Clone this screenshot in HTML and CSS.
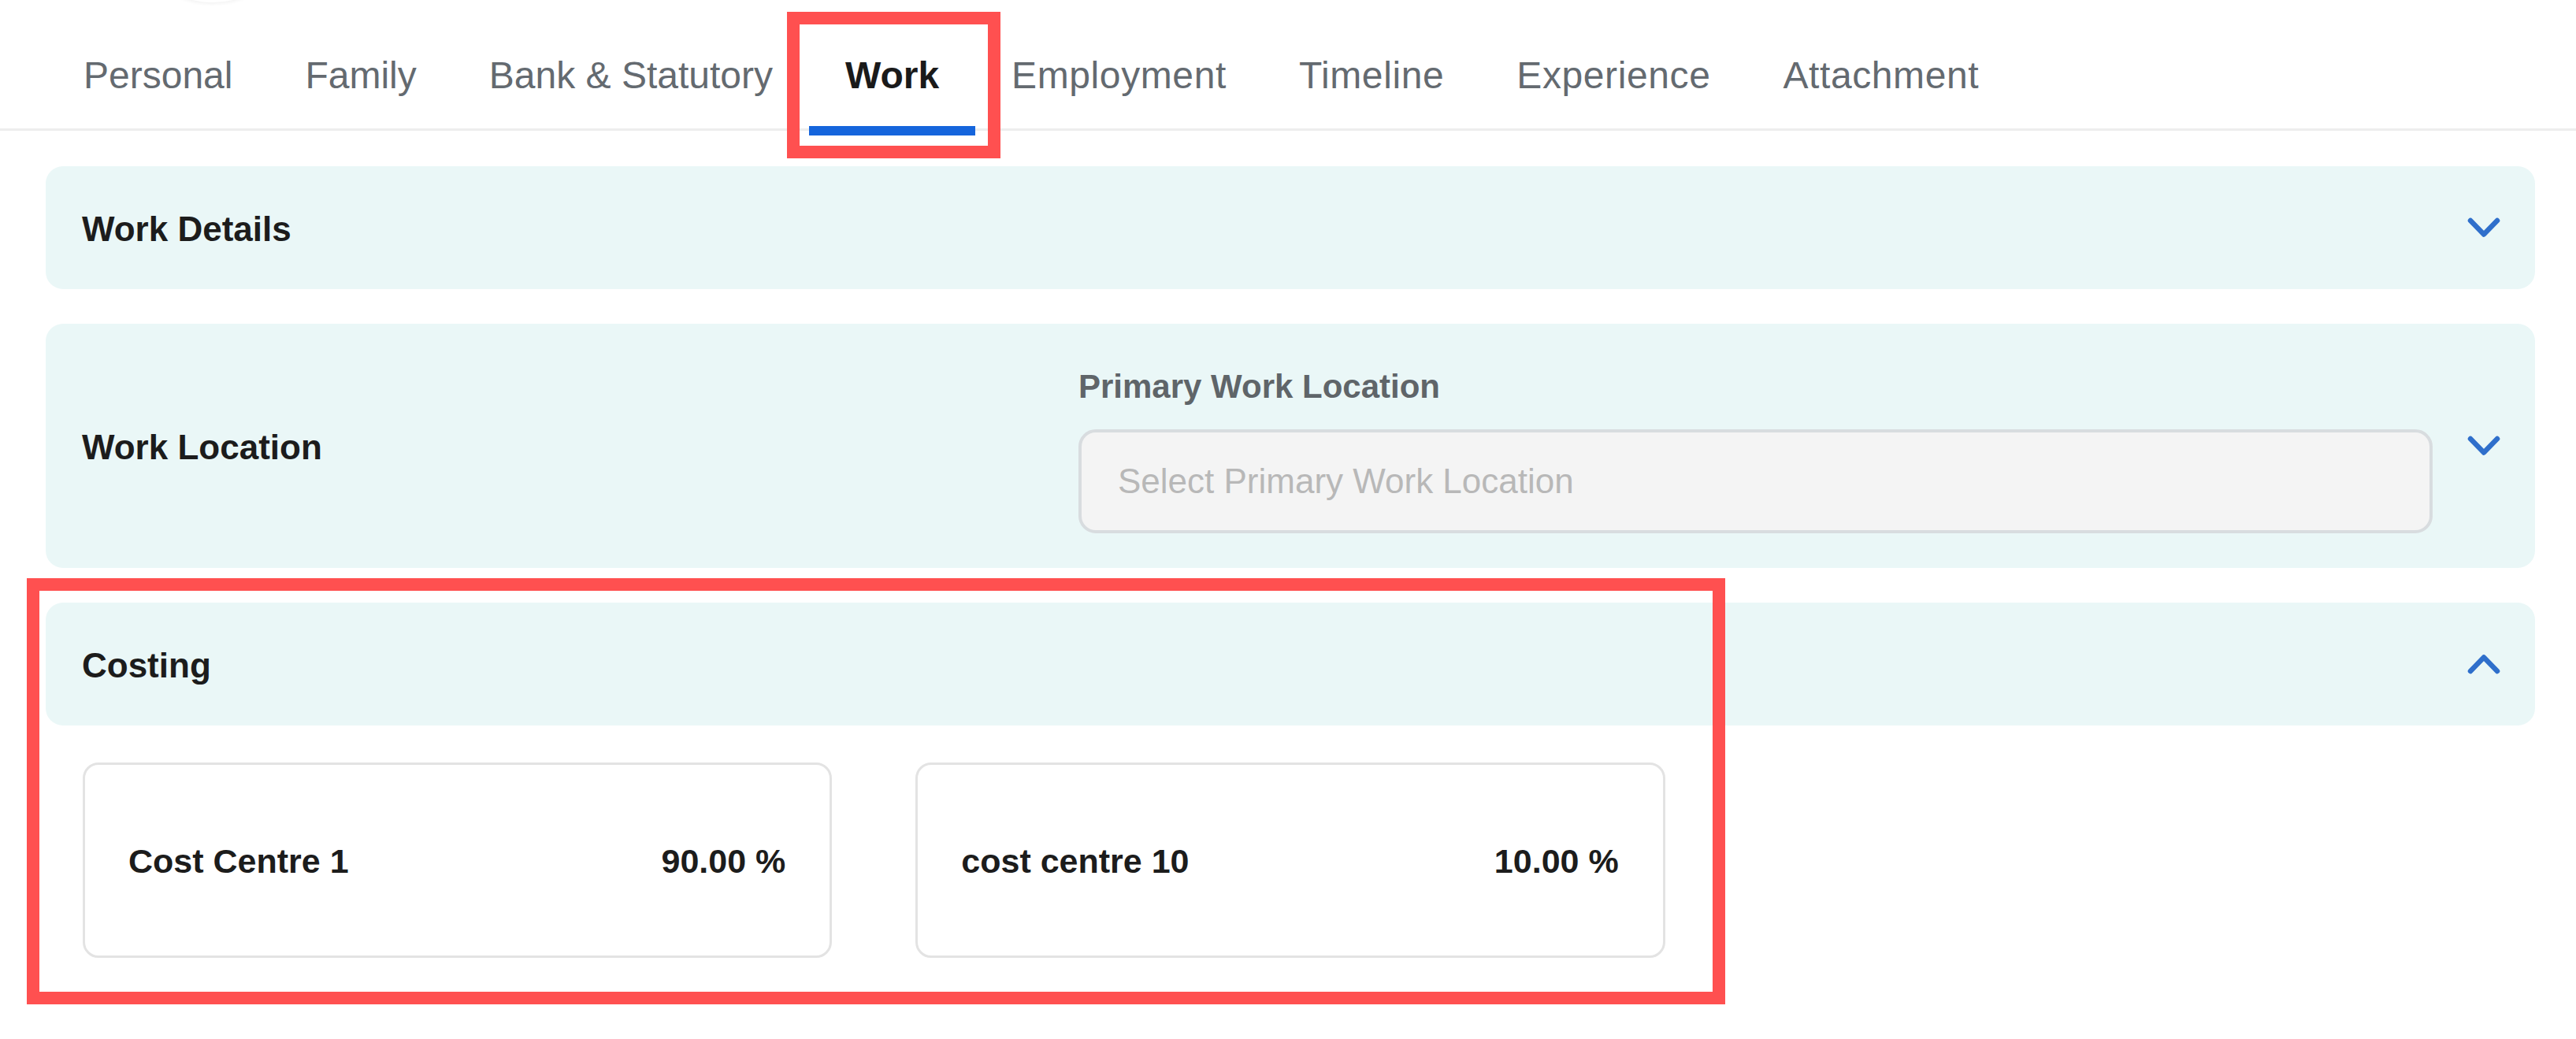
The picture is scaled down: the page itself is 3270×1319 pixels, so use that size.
FILE: index.html
```html
<!DOCTYPE html>
<html lang="en">
<head>
<meta charset="utf-8">
<title>Work</title>
<link rel="stylesheet" href="styles.css">
</head>
<body>
<div class="page">
  <div class="avatar-shadow"></div>
  <nav class="tabs">
    <div class="tab">Personal</div>
    <div class="tab">Family</div>
    <div class="tab">Bank &amp; Statutory</div>
    <div class="tab active">Work</div>
    <div class="tab">Employment</div>
    <div class="tab">Timeline</div>
    <div class="tab">Experience</div>
    <div class="tab">Attachment</div>
  </nav>

  <main class="sections">
    <section class="panel">
      <h2 class="panel-title">Work Details</h2>
      <svg class="chevron" viewBox="0 0 42 26" width="42" height="26"><polyline points="4,4 21,21.5 38,4"/></svg>
    </section>

    <section class="panel panel-form">
      <h2 class="panel-title title-col">Work Location</h2>
      <div class="field">
        <label class="field-label">Primary Work Location</label>
        <div class="select">Select Primary Work Location</div>
      </div>
      <svg class="chevron" viewBox="0 0 42 26" width="42" height="26"><polyline points="4,4 21,21.5 38,4"/></svg>
    </section>

    <section class="panel">
      <h2 class="panel-title">Costing</h2>
      <svg class="chevron" viewBox="0 0 42 26" width="42" height="26"><polyline points="4,22 21,4.5 38,22"/></svg>
    </section>

    <div class="cards">
      <div class="card"><span>Cost Centre 1</span><span>90.00 %</span></div>
      <div class="card"><span>cost centre 10</span><span>10.00 %</span></div>
    </div>
  </main>

  <div class="annot annot-tab"></div>
  <div class="annot annot-costing"></div>
</div>
</body>
</html>
```

FILE: styles.css
```css
* { box-sizing: border-box; }
html, body { margin: 0; padding: 0; background: #ffffff; }
body { font-family: "Liberation Sans", Arial, sans-serif; color: #1c1c1c; }

.page {
  position: relative;
  width: 3270px;
  height: 1319px;
  overflow: hidden;
}

.avatar-shadow {
  position: absolute;
  left: 205px;
  top: -70px;
  width: 130px;
  height: 73px;
  border-radius: 50%;
  box-shadow: 0 2px 4px rgba(0, 0, 0, 0.05);
}

/* Tabs */
.tabs {
  display: flex;
  padding-left: 60px;
  border-bottom: 3px solid #ededed;
}
.tab {
  position: relative;
  padding: 68px 46px 39px;
  font-size: 48px;
  line-height: 56px;
  color: #646a70;
  white-space: nowrap;
}
.tab.active ~ .tab {
  letter-spacing: 0.6px;
}
.tab.active {
  color: #1a1a1a;
  font-weight: 700;
}
.tab.active::after {
  content: "";
  position: absolute;
  left: 0;
  right: 0;
  bottom: -9px;
  height: 12px;
  background: #1565dc;
}

/* Sections */
.sections {
  display: flex;
  flex-direction: column;
  gap: 44px;
  padding: 45px 52px 0 58px;
}
.panel {
  display: flex;
  align-items: center;
  justify-content: space-between;
  height: 156px;
  padding: 0 44px 0 46px;
  background: #eaf7f7;
  border-radius: 22px;
}
.panel-title {
  margin: 0;
  padding-top: 3px;
  font-size: 44px;
  line-height: 52px;
  font-weight: 700;
  color: #1c1c1c;
}
.chevron {
  flex: 0 0 auto;
  fill: none;
  stroke: #2f6fcb;
  stroke-width: 6.5;
  stroke-linecap: round;
  stroke-linejoin: round;
}

.panel-form {
  height: 310px;
  padding-top: 56px;
  padding-bottom: 44px;
  justify-content: flex-start;
}
.title-col {
  flex: 0 0 1265px;
  margin-top: -12px;
}
.field {
  flex: 1 1 auto;
  display: flex;
  flex-direction: column;
  margin-right: 44px;
}
.field-label {
  font-size: 42px;
  line-height: 48px;
  font-weight: 700;
  color: #5f6569;
  margin-bottom: 30px;
}
.select {
  height: 132px;
  display: flex;
  align-items: center;
  padding: 0 46px;
  background: #f4f4f4;
  border: 4px solid #d8dcdf;
  border-radius: 22px;
  font-size: 44px;
  color: #b8b8b8;
}
.panel-form .chevron {
  margin-top: -12px;
}

/* Cards */
.cards {
  display: grid;
  grid-template-columns: repeat(3, 1fr);
  column-gap: 106px;
  margin-top: 3px;
  padding: 0 47px;
}
.card {
  height: 248px;
  display: flex;
  align-items: center;
  justify-content: space-between;
  padding: 2px 56px 0 55px;
  border: 3px solid #e3e3e3;
  border-radius: 20px;
  font-size: 43px;
  font-weight: 700;
  color: #1c1c1c;
}

/* Annotation boxes */
.annot {
  position: absolute;
  border: 16px solid #ff5050;
  pointer-events: none;
}
.annot-tab {
  left: 999px;
  top: 15px;
  width: 271px;
  height: 186px;
}
.annot-costing {
  left: 34px;
  top: 734px;
  width: 2156px;
  height: 541px;
}
```
